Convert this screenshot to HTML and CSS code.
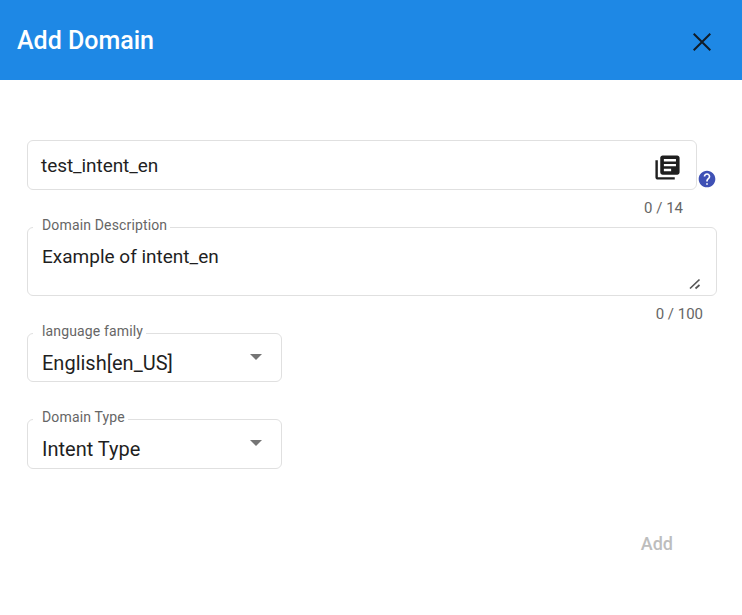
FILE: index.html
```html
<!DOCTYPE html>
<html lang="en">
<head>
<meta charset="utf-8">
<title>Add Domain</title>
<link rel="stylesheet" href="styles.css">
</head>
<body>
<header class="toolbar">
  <h1 class="title">Add Domain</h1>
  <button class="icon-button close" aria-label="Close">
    <svg width="18" height="18" viewBox="0 0 18 18"><path d="M.7.7l16.600 16.600M17.300.7L.7 17.300" stroke="#111c27" stroke-width="2" fill="none"/></svg>
  </button>
</header>
<main class="form">
  <div class="name-row">
    <div class="field name-field">
      <span class="value name-value">test_intent_en</span>
      <svg class="library" width="29" height="29" viewBox="0 0 24 24"><path fill="#1f1f1f" d="M4 6H2v14c0 1.100.9 2 2 2h14v-2H4V6zm16-4H8c-1.100 0-2 .9-2 2v12c0 1.100.9 2 2 2h12c1.100 0 2-.9 2-2V4c0-1.100-.9-2-2-2zm-1 9H9V9h10v2zm-4 4H9v-2h6v2zm4-8H9V5h10v2z"/></svg>
    </div>
    <svg class="help" width="20" height="20" viewBox="0 0 24 24"><path fill="#3f51b5" d="M12 2C6.480 2 2 6.480 2 12s4.480 10 10 10 10-4.480 10-10S17.520 2 12 2zm1 17h-2v-2h2v2zm2.070-7.750l-.9.920C13.450 12.900 13 13.500 13 15h-2v-.5c0-1.100.45-2.100 1.170-2.830l1.240-1.260c.37-.36.59-.86.59-1.410 0-1.100-.9-2-2-2s-2 .9-2 2H8c0-2.210 1.790-4 4-4s4 1.790 4 4c0 .88-.36 1.680-.93 2.250z"/></svg>
  </div>
  <div class="counter name-counter">0 / 14</div>
  <div class="field description-field">
    <span class="label">Domain Description</span>
    <span class="value">Example of intent_en</span>
    <svg class="grip" width="12" height="12" viewBox="0 0 12 12"><path d="M1 10.500L10.500 1.500M6.500 10.500L10.500 7" stroke="#555" stroke-width="1.700" fill="none"/></svg>
  </div>
  <div class="counter description-counter">0 / 100</div>
  <div class="field select language">
    <span class="label">language family</span>
    <span class="value">English[en_US]</span>
    <span class="arrow"></span>
  </div>
  <div class="field select type">
    <span class="label">Domain Type</span>
    <span class="value">Intent Type</span>
    <span class="arrow"></span>
  </div>
  <div class="actions"><button class="add" disabled>Add</button></div>
</main>
</body>
</html>
```
FILE: styles.css
```css
* { box-sizing: border-box; }
body {
  margin: 0;
  background: #fff;
  color: #1f1f1f;
  font-family: Roboto, sans-serif;
}
svg { display: block; }
button { border: 0; padding: 0; background: none; font: inherit; }
.toolbar {
  display: flex;
  justify-content: space-between;
  height: 80px;
  padding: 26px 31px 0 17px;
  background: #1e88e5;
}
.title {
  margin: 0;
  color: #fff;
  font-size: 25px;
  line-height: 30px;
  font-weight: 500;
}
.close { height: 18px; margin-top: 7px; }
.form { padding: 60px 25px 0 27px; }
.name-row { display: flex; }
.field {
  position: relative;
  display: flex;
  border: 1px solid #e0e0e0;
  border-radius: 6px;
}
.name-field {
  width: 670px;
  height: 50px;
  padding: 13px 14.500px 0 13px;
  justify-content: space-between;
}
.help { margin: 29px 0 0; }
.value { font-size: 19px; line-height: 24px; white-space: nowrap; }
.name-value { letter-spacing: -.07px; }
.library { margin-top: -1.500px; }
.counter {
  font-size: 15px;
  line-height: 18px;
  color: #666;
  text-align: right;
}
.name-counter { margin: 9px 34px 10px 0; }
.description-field {
  width: 690px;
  height: 69px;
  padding: 17px 15px 0 14px;
  justify-content: space-between;
}
.label {
  position: absolute;
  top: -12px;
  left: 5px;
  padding: 0 3px 0 9px;
  background: #fff;
  color: #666;
  font-size: 14px;
  line-height: 18px;
  letter-spacing: .15px;
  white-space: nowrap;
}
.grip { margin-top: 33px; }
.description-counter { margin: 9px 14px 10px 0; }
.select {
  width: 255px;
  height: 49px;
  padding: 17px 19px 0 14px;
  justify-content: space-between;
}
.select .value { font-size: 20px; }
.arrow {
  width: 0;
  height: 0;
  margin-top: 3px;
  border: 6px solid transparent;
  border-top-color: #757575;
  border-bottom: 0;
}
.type { height: 50px; margin-top: 37px; }
.actions { display: flex; justify-content: flex-end; padding: 63px 44px 0 0; }
.add { color: #bdbdbd; font-size: 18px; line-height: 24px; font-weight: 500; }
```
